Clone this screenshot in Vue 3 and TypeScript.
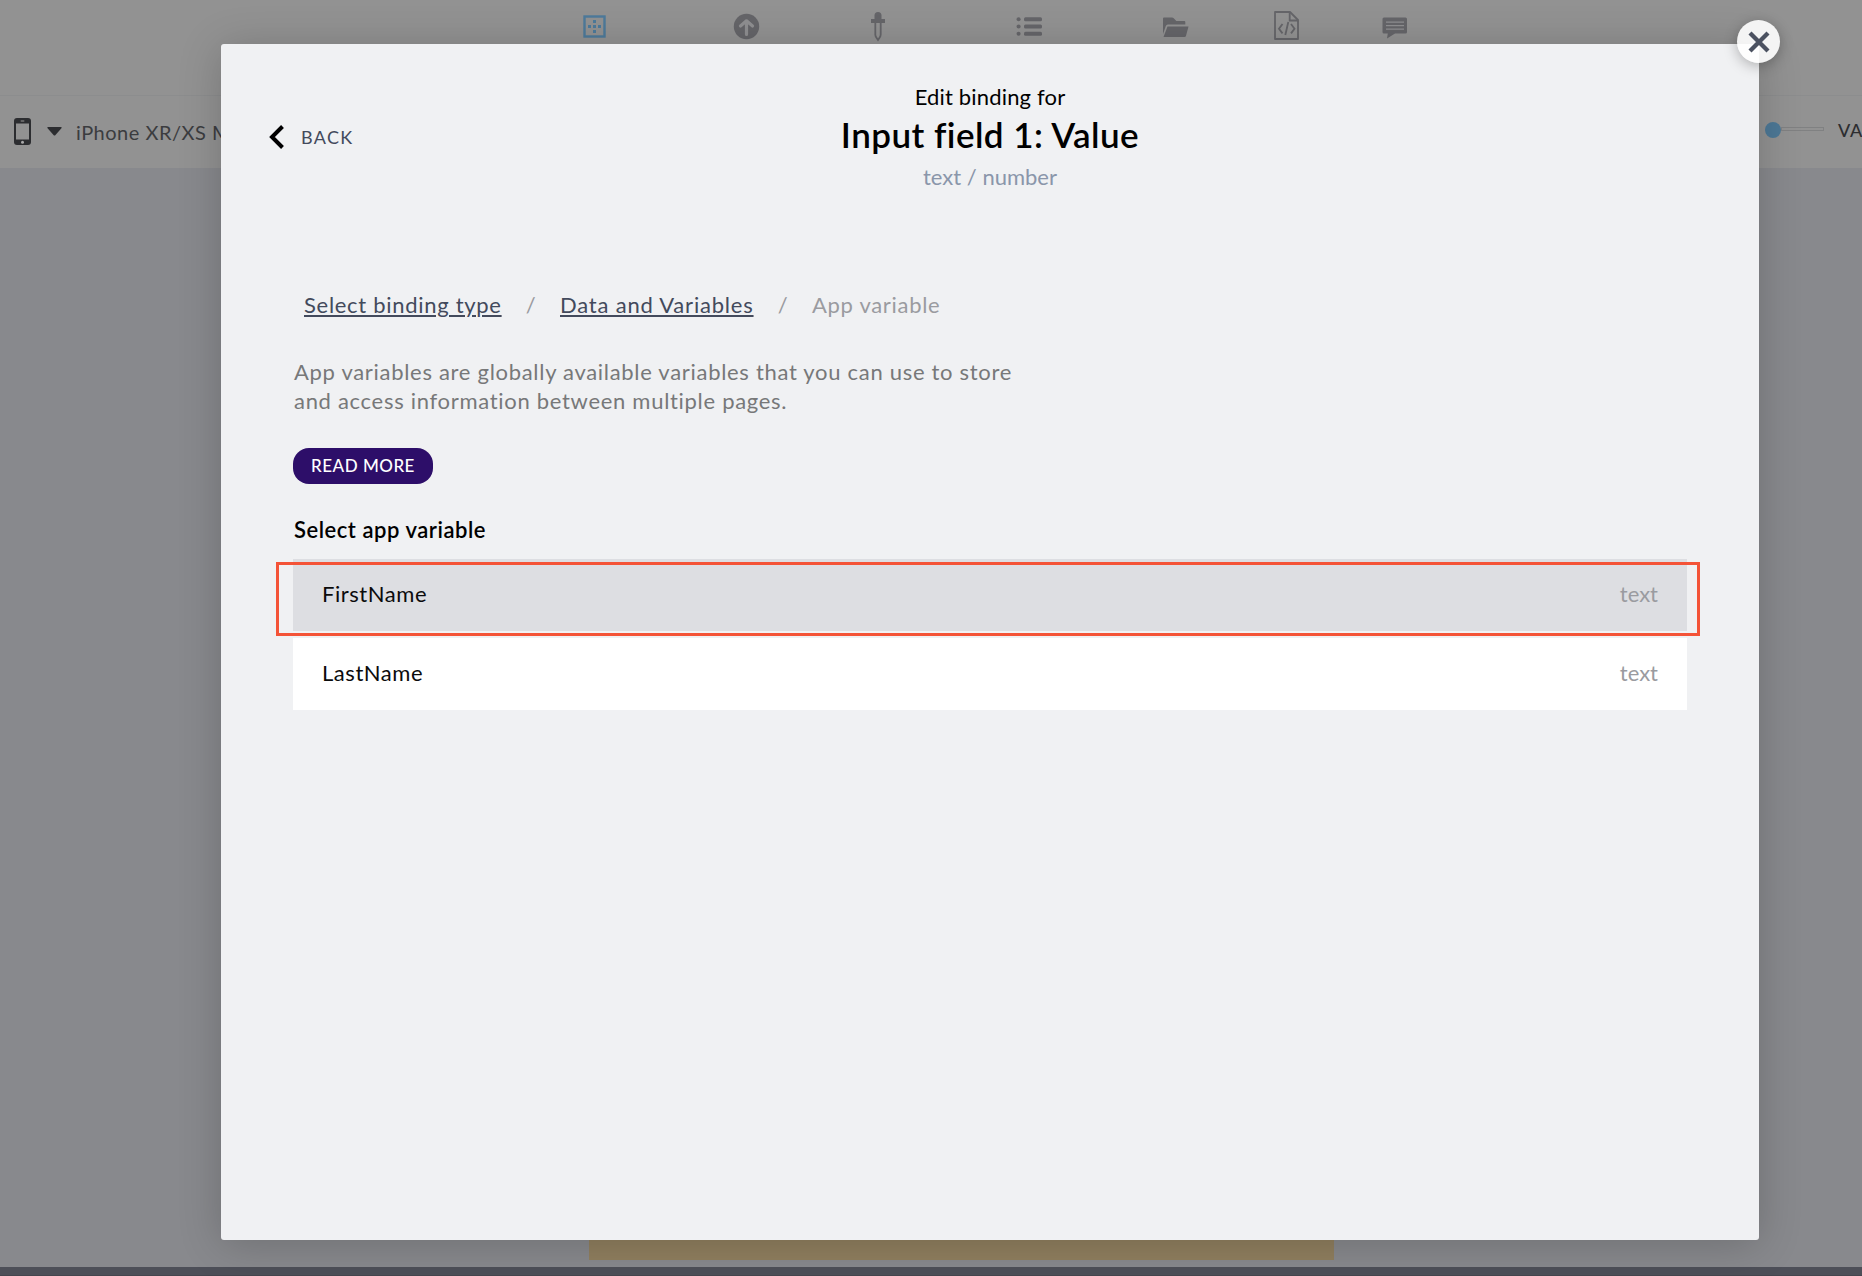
<script setup lang="ts">
interface AppVariable {
  name: string
  type: string
}

const variables: AppVariable[] = [
  { name: 'FirstName', type: 'text' },
  { name: 'LastName', type: 'text' },
]
const selected = 'FirstName'
</script>

<template>
  <div class="page">
    <header class="topbar">
      <svg class="tools" width="780" height="50" viewBox="0 0 780 50">
        <rect x="4.500" y="16.500" width="20" height="20" fill="none" stroke="#4d7a9b" stroke-width="2.400" />
        <path fill="#4d7a9b" d="M13 20h3v3h-3zM13 25h3v3h-3zM13 30h3v3h-3zM8 25h3v3h-3zM18 25h3v3h-3z" />
        <circle cx="166.500" cy="26.500" r="12.700" fill="#656569" />
        <path d="M166.500 34.500V21.500M160.500 26l6-5.200l6 5.200" fill="none" stroke="#8f8f91" stroke-width="3.200" stroke-linecap="round" stroke-linejoin="round" />
        <path fill="#656569" d="M294.500 19v-3.500q0-3.500 3.500-3.500t3.500 3.500V19h3.500v4h-14v-4z" />
        <path d="M295.300 22v12.500q0 1.500 1 3l1.700 2.500l1.700-2.500q1-1.500 1-3V22" fill="none" stroke="#656569" stroke-width="1.800" />
        <g transform="translate(-20 0)">
          <g fill="#656569">
            <circle cx="458.600" cy="19.200" r="2" /><circle cx="458.600" cy="26.500" r="2" /><circle cx="458.600" cy="33.800" r="2" />
            <rect x="464" y="17.200" width="18" height="4" rx="1.500" /><rect x="464" y="24.500" width="18" height="4" rx="1.500" /><rect x="464" y="31.800" width="18" height="4" rx="1.500" />
            <path d="M603 34V18.500q0-1 1-1h8q1 0 1.700.8l2.600 2.700h8q1 0 1 1v2.500h-17.500q-1.500 0-2 1.500z" />
            <path d="M607.500 26.500H628.500l-2.500 9.300q-.3 1.200-1.500 1.200H603.500z" />
          </g>
          <g fill="none" stroke="#656569" stroke-width="1.800">
            <path d="M715 12h15l8 8v19h-23z" stroke-linejoin="round" />
            <path d="M729.700 12v8.500h8.500M722.500 24l-3.500 4.700l3.500 4.700M731 24l3.500 4.700l-3.500 4.700M728.300 22l-3 13" />
          </g>
        </g>
      </svg>
      <svg class="chat" width="26" height="23" viewBox="0 0 26 23">
        <path fill="#656569" d="M2 .5h21.500q1.500 0 1.500 1.500v13q0 1.500-1.500 1.500H13l-8 5 .8-5H2q-1.500 0-1.500-1.500V2Q.5.500 2 .5z" />
        <path d="M4 5.200h18M4 8.700h18M4 12.200h18" stroke="#8f8f91" stroke-width="1.300" />
      </svg>
    </header>

    <div class="subbar">
      <div class="device">
        <svg width="17" height="27" viewBox="0 0 17 27">
          <rect width="17" height="27" rx="3" fill="#2c2d30" />
          <rect x="2" y="5.500" width="13" height="16" fill="#929292" />
          <rect x="6.500" y="2.200" width="4" height="1.500" rx=".7" fill="#777" />
          <circle cx="8.500" cy="24.200" r="1.500" fill="#aaa" />
        </svg>
        <svg class="caret" width="15" height="9" viewBox="0 0 15 9"><path d="M1 0h13q1 0 .6 1L8.500 8q-1 1-2 0L.4 1Q0 0 1 0z" fill="#2c2d30" /></svg>
        <span class="device-name">iPhone XR/XS M</span>
      </div>
      <div class="toggle">
        <span class="knob"></span><span class="track"></span>
        <span class="toggle-label">VA</span>
      </div>
    </div>

    <main class="canvas"><div class="preview-edge"></div></main>
    <footer class="statusbar"></footer>

    <section class="modal">
      <header class="head">
        <button class="back">
          <svg width="16" height="26" viewBox="0 0 16 26"><path d="M13.500 2.500L3 13l10.500 10.500" fill="none" stroke="#000" stroke-width="4" /></svg>
          <span>BACK</span>
        </button>
        <div class="titles">
          <p class="pre">Edit binding for</p>
          <h1>Input field 1: Value</h1>
          <p class="kind">text / number</p>
        </div>
      </header>

      <nav class="crumbs">
        <a class="c1">Select binding type</a><i>/</i><a class="c2">Data and Variables</a><i>/</i><span>App variable</span>
      </nav>

      <p class="about">App variables are globally available variables that you can use to store<br />and access information between multiple pages.</p>
      <button class="more">READ MORE</button>
      <h2>Select app variable</h2>

      <ul class="list">
        <li v-for="v in variables" :key="v.name" :class="{ selected: v.name === selected }">
          <span class="name">{{ v.name }}</span>
          <span class="type">{{ v.type }}</span>
        </li>
      </ul>
      <div class="highlight"></div>

      <button class="close" aria-label="Close">
        <svg width="22" height="22" viewBox="0 0 22 22"><path d="M2 2l18 18M20 2L2 20" stroke="#4b5160" stroke-width="4.300" /></svg>
      </button>
    </section>
  </div>
</template>

<style>
body { margin: 0; overflow: hidden; }
</style>

<style scoped>
.page {
  position: relative;
  display: flex;
  flex-direction: column;
  width: 1862px;
  height: 1276px;
  overflow: hidden;
  box-sizing: border-box;
  background: #929292;
  font-family: Lato, "Open Sans", sans-serif;
  font-size: 22px;
  line-height: 28px;
  white-space: nowrap;
}
p, h1, h2, ul { margin: 0; padding: 0; font-weight: 400; }
button { border: 0; padding: 0; background: none; font: inherit; display: flex; align-items: center; }
svg { display: block; flex: none; }

.topbar { display: flex; height: 96px; box-sizing: border-box; border-bottom: 1px solid #8c8d8e; padding-left: 580px; }
.chat { margin: 17px 0 0 22px; }
.subbar { display: flex; justify-content: space-between; height: 72px; }
.device { display: flex; align-items: center; padding-left: 14px; height: 71px; }
.caret { margin-left: 16px; }
.device-name { margin-left: 14px; color: #3b3c3f; font-size: 20px; letter-spacing: 0.5px; }
.toggle { display: flex; align-items: center; width: 97px; height: 67px; }
.knob { flex: none; width: 16px; height: 16px; border-radius: 50%; background: #4d7896; }
.track { flex: none; width: 43px; height: 4px; margin-top: -1px; box-sizing: border-box; border: 1px solid #808182; }
.toggle-label { margin-left: 14px; font-size: 18px; letter-spacing: 0.8px; color: #2c2d30; font-weight: 500; }
.canvas { flex: 1; display: flex; align-items: flex-end; background: #88898d; padding: 0 0 7px 589px; }
.preview-edge { width: 745px; height: 60px; background: #907f5f; }
.statusbar { height: 9px; box-sizing: border-box; background: #4d4f58; border-bottom: 1px solid #45464e; }

.modal {
  position: absolute;
  left: 221px;
  top: 44px;
  width: 1538px;
  height: 1196px;
  box-sizing: border-box;
  padding: 39px 72px 0;
  border-radius: 3px;
  background: #f0f1f3;
  box-shadow: 0 4px 44px rgba(0, 0, 0, 0.2);
}
.head { display: grid; grid-template-columns: 1fr auto 1fr; height: 208px; align-items: start; }
.back { height: 28px; margin: 40px 0 0 -24px; color: #434a5c; font-size: 18px; }
.back span { margin-left: 16px; letter-spacing: 1.3px; }
.titles { text-align: center; color: #000; display: flex; flex-direction: column; align-items: center; width: 500px; }
.pre { letter-spacing: 0.17px; }
h1 { margin-top: 3px; font-size: 35px; line-height: 40px; font-weight: 600; letter-spacing: 0.45px; }
.kind { margin-top: 9px; color: #8a96aa; }
.crumbs { display: flex; margin-left: 11px; color: #9a9ba0; height: 28px; letter-spacing: 0.7px; }
.crumbs a { color: #434a5c; text-decoration: underline; text-decoration-thickness: 2px; text-underline-offset: 2px; }
.crumbs i { font-style: normal; width: 58px; text-align: center; }
.c1 { width: 198px; }
.c2 { width: 194px; letter-spacing: 0.8px; }
.about { margin: 38px 0 0 1px; line-height: 29px; color: #777879; letter-spacing: 0.7px; }
.more { justify-content: center; width: 140px; height: 36px; margin-top: 33px; border-radius: 16px; background: #2d0e69; color: #fff; font-size: 17px; font-weight: 500; letter-spacing: 0.5px; }
h2 { margin: 32px 0 0 1px; font-size: 22px; line-height: 28px; font-weight: 600; letter-spacing: 0.53px; }
.list { list-style: none; display: flex; flex-direction: column; gap: 7px; margin-top: 15px; }
.list li { display: flex; justify-content: space-between; align-items: center; height: 72px; padding: 0 29px 2px 29px; box-sizing: border-box; background: #fff; }
.list li.selected { background: #dddee2; }
.name { color: #0b0b0c; letter-spacing: 0.55px; }
.type { color: #9a9ba0; }
.highlight { position: absolute; left: 55px; top: 518px; width: 1424px; height: 74px; box-sizing: border-box; border: 3px solid #f45337; }
.close { position: absolute; left: 1516px; top: -24px; width: 43px; height: 43px; justify-content: center; border-radius: 50%; background: rgba(255, 255, 255, 0.9); box-shadow: 0 3px 14px rgba(0, 0, 0, 0.28); }
</style>
